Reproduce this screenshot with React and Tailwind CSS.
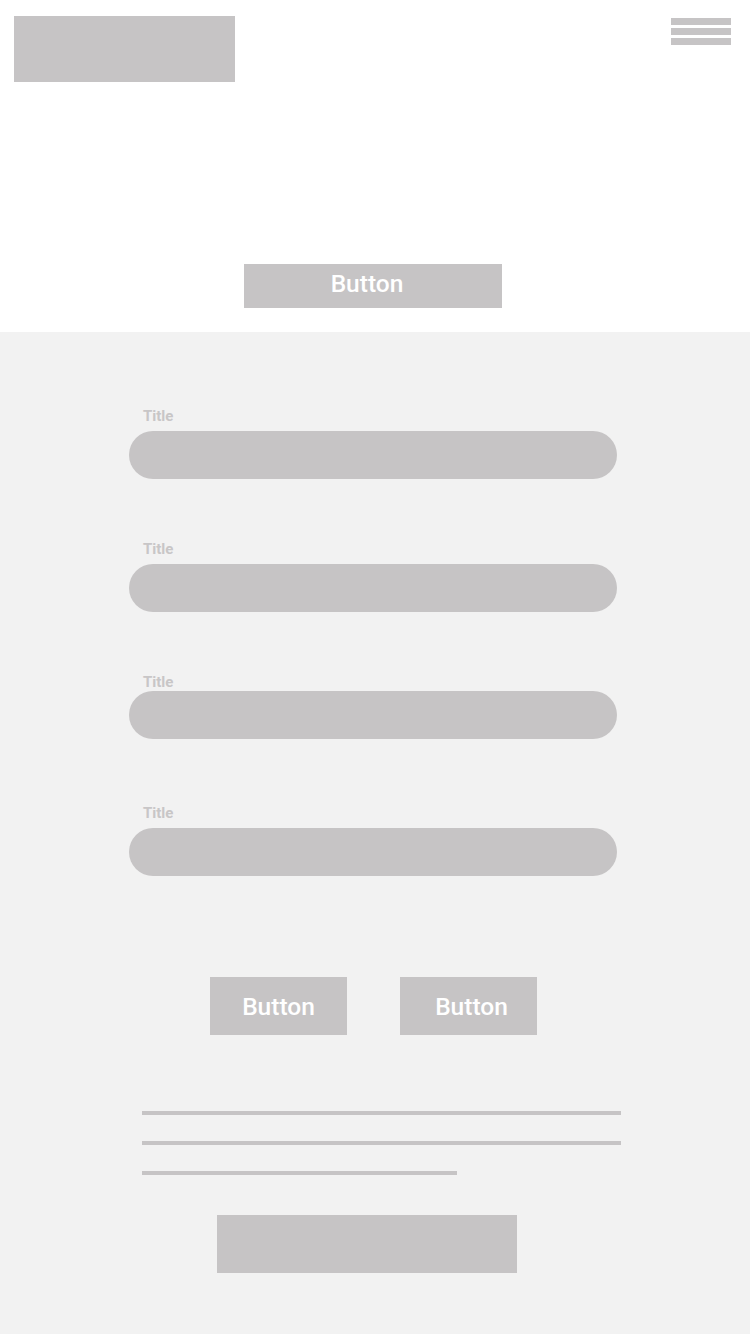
export default function App() {
  const font = { fontFamily: 'Roboto, "Liberation Sans", sans-serif' };
  const fields = [
    { label: 'mt-[75px]', lmb: 'mb-[6px]' },
    { label: 'mt-[61px]', lmb: 'mb-[6px]' },
    { label: 'mt-[61px]', lmb: 'mb-0' },
    { label: 'mt-[65px]', lmb: 'mb-[6px]' },
  ];
  return (
    <div className="w-[750px] min-h-[1334px] flex flex-col bg-[#f2f2f2]" style={font}>
      <header className="h-[332px] bg-white flex flex-col">
        <div className="flex justify-between items-start pl-[14px] pr-[19px] pt-[16px]">
          <div className="w-[221px] h-[66px] bg-[#c6c4c5]" />
          <div className="mt-[2px] w-[60px] flex flex-col gap-[3px]">
            <div className="h-[7px] bg-[#c6c4c5]" />
            <div className="h-[7px] bg-[#c6c4c5]" />
            <div className="h-[7px] bg-[#c6c4c5]" />
          </div>
        </div>
        <div className="flex justify-center mt-[182px]">
          <div className="mr-[4px] w-[258px] h-[44px] bg-[#c6c4c5] flex items-center justify-center pr-[12px] pb-[3px] text-white text-[24.5px] font-medium leading-none">
            Button
          </div>
        </div>
      </header>
      <main className="flex flex-col items-center pb-[61px]">
        <div className="w-[488px] mr-[4px] flex flex-col">
          {fields.map((f, i) => (
            <div key={i} className={`flex flex-col ${f.label}`}>
              <div className={`ml-[14px] text-[15px] leading-[18px] font-bold text-[#c8c6c7] ${f.lmb}`}>Title</div>
              <div className="h-[48px] rounded-full bg-[#c6c4c5]" />
            </div>
          ))}
        </div>
        <div className="mt-[101px] flex gap-[53px] pr-[3px]">
          <div className="w-[137px] h-[58px] bg-[#c6c4c5] flex items-center justify-center pt-[3px] text-white text-[24.5px] font-medium leading-none">
            Button
          </div>
          <div className="w-[137px] h-[58px] bg-[#c6c4c5] flex items-center justify-center pl-[6px] pt-[3px] text-white text-[24.5px] font-medium leading-none">
            Button
          </div>
        </div>
        <div className="mt-[76px] w-[479px] ml-[13px] flex flex-col gap-[26px]">
          <div className="h-[4px] bg-[#c6c4c5]" />
          <div className="h-[4px] bg-[#c6c4c5]" />
          <div className="h-[4px] w-[315px] bg-[#c6c4c5]" />
        </div>
        <div className="mt-[40px] w-[300px] h-[58px] bg-[#c6c4c5] ml-[-16px]" />
      </main>
    </div>
  );
}
